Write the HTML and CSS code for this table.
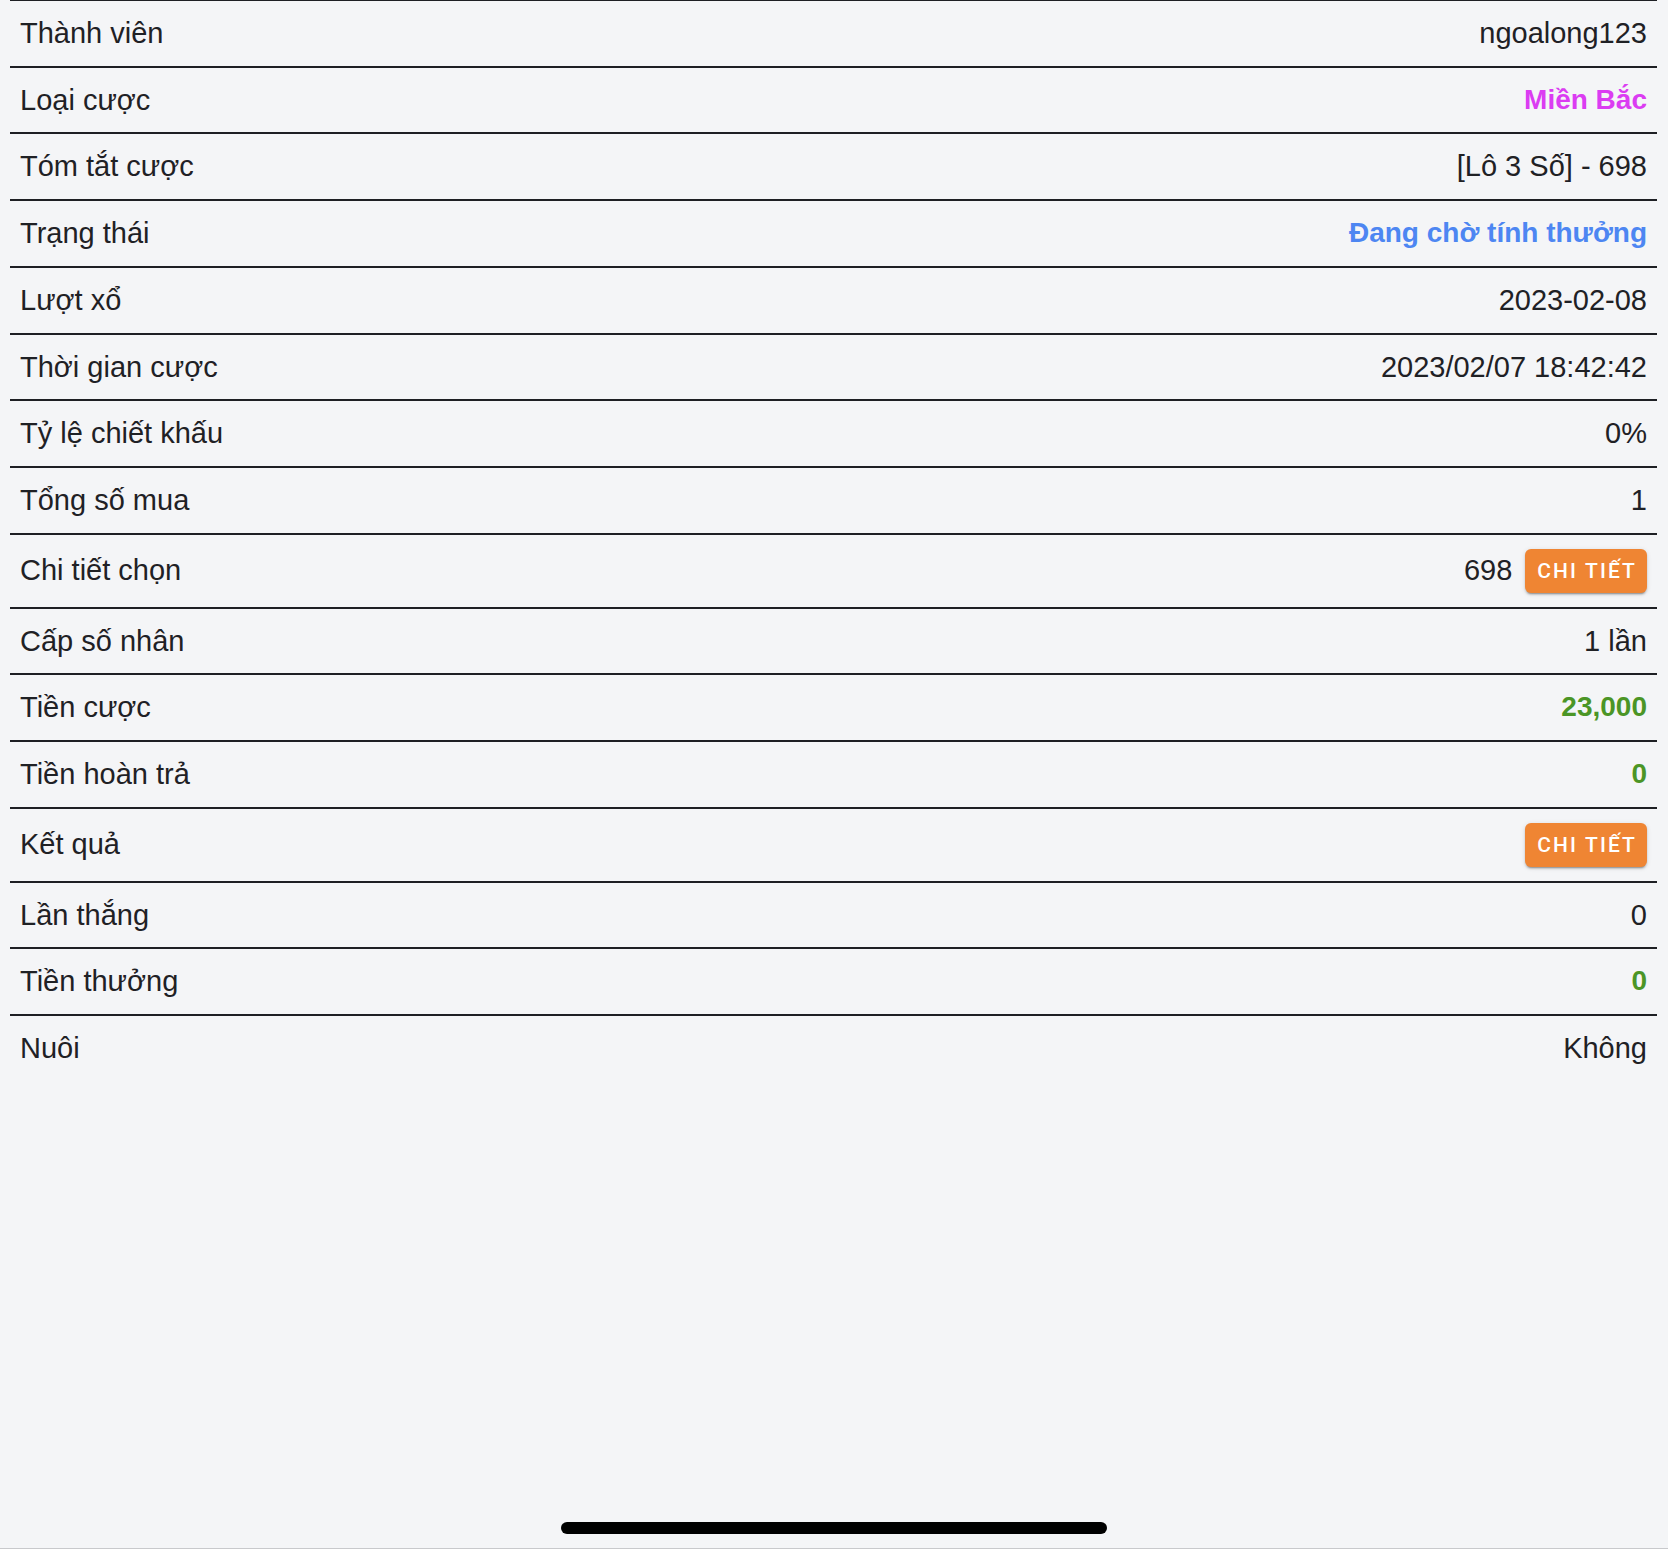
FILE: index.html
```html
<!DOCTYPE html>
<html lang="vi">
<head>
    <meta charset="UTF-8">
    <meta name="viewport" content="width=device-width, initial-scale=1.0">
    <title>Chi tiết cược</title>
    <link rel="stylesheet" href="styles.css">
</head>
<body>

    <div class="screen">
        <div class="detail-list">
            <div class="row">
                <span class="label">Thành viên</span>
                <span class="value">ngoalong123</span>
            </div>
            <div class="row">
                <span class="label">Loại cược</span>
                <span class="value bold purple">Miền Bắc</span>
            </div>
            <div class="row">
                <span class="label">Tóm tắt cược</span>
                <span class="value">[Lô 3 Số] - 698</span>
            </div>
            <div class="row">
                <span class="label">Trạng thái</span>
                <span class="value bold blue">Đang chờ tính thưởng</span>
            </div>
            <div class="row">
                <span class="label">Lượt xổ</span>
                <span class="value">2023-02-08</span>
            </div>
            <div class="row">
                <span class="label">Thời gian cược</span>
                <span class="value">2023/02/07 18:42:42</span>
            </div>
            <div class="row">
                <span class="label">Tỷ lệ chiết khấu</span>
                <span class="value">0%</span>
            </div>
            <div class="row">
                <span class="label">Tổng số mua</span>
                <span class="value">1</span>
            </div>
            <div class="row">
                <span class="label">Chi tiết chọn</span>
                <span class="value with-btn">698 <button class="detail-btn">Chi tiết</button></span>
            </div>
            <div class="row">
                <span class="label">Cấp số nhân</span>
                <span class="value">1 lần</span>
            </div>
            <div class="row">
                <span class="label">Tiền cược</span>
                <span class="value bold green">23,000</span>
            </div>
            <div class="row">
                <span class="label">Tiền hoàn trả</span>
                <span class="value bold green">0</span>
            </div>
            <div class="row">
                <span class="label">Kết quả</span>
                <span class="value with-btn"><button class="detail-btn">Chi tiết</button></span>
            </div>
            <div class="row">
                <span class="label">Lần thắng</span>
                <span class="value">0</span>
            </div>
            <div class="row">
                <span class="label">Tiền thưởng</span>
                <span class="value bold green">0</span>
            </div>
            <div class="row last">
                <span class="label">Nuôi</span>
                <span class="value">Không</span>
            </div>
        </div>

        <div class="home-indicator"></div>
    </div>

</body>
</html>
```

FILE: styles.css
```css
body {
    margin: 0;
    background-color: #f4f5f7;
    font-family: "Liberation Sans", Arial, sans-serif;
    color: #1f2125;
}

.screen {
    position: relative;
    height: 1549px;
    box-sizing: border-box;
    border-bottom: 1px solid #c8c9cc;
    overflow: hidden;
}

.detail-list {
    margin: -1px 11px 0 10px;
    border-top: 2px solid #1e1f24;
}

.row {
    display: flex;
    justify-content: space-between;
    align-items: center;
    padding: 14px 10px;
    line-height: 36.7px;
    font-size: 29px;
    border-bottom: 2px solid #1e1f24;
}

.row.last {
    border-bottom: none;
}

.value {
    text-align: right;
}

.with-btn {
    display: flex;
    align-items: center;
    gap: 13px;
}

.bold {
    font-weight: bold;
    font-size: 28px;
}

.purple {
    color: #db3cf2;
}

.blue {
    color: #4d86f2;
}

.green {
    color: #4b9526;
}

.detail-btn {
    height: 44px;
    padding: 0 10px 0 12px;
    border: none;
    border-radius: 6px;
    background-color: #ef8533;
    color: white;
    font-family: Roboto, "Liberation Sans", sans-serif;
    font-size: 21px;
    font-weight: 500;
    letter-spacing: 0.1em;
    text-transform: uppercase;
    box-shadow: 0 3px 1px -2px rgba(0, 0, 0, 0.2), 0 2px 2px 0 rgba(0, 0, 0, 0.14), 0 1px 5px 0 rgba(0, 0, 0, 0.12);
    cursor: pointer;
}

.home-indicator {
    position: absolute;
    left: 561px;
    bottom: 14px;
    width: 546px;
    height: 12px;
    border-radius: 6px;
    background-color: #000;
}
```
